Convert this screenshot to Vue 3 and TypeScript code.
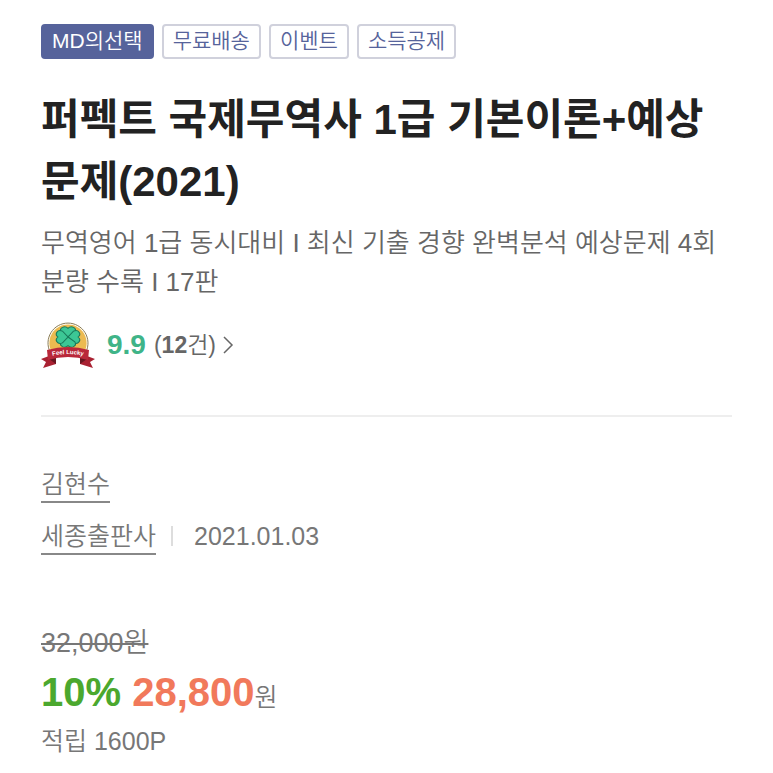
<script setup lang="ts">
interface Tag {
  label: string
  featured?: boolean
}

const tags: Tag[] = [
  { label: 'MD의선택', featured: true },
  { label: '무료배송' },
  { label: '이벤트' },
  { label: '소득공제' },
]

const leafAngles = [0, 90, 180, 270]

const book = {
  title: '퍼펙트 국제무역사 1급 기본이론+예상문제(2021)',
  subtitle: '무역영어 1급 동시대비 I 최신 기출 경향 완벽분석 예상문제 4회분량 수록 I 17판',
  score: '9.9',
  reviews: 12,
  author: '김현수',
  publisher: '세종출판사',
  published: '2021.01.03',
  listPrice: '32,000',
  discount: '10%',
  price: '28,800',
  points: '1600P',
}
</script>

<template>
  <main class="product">
    <ul class="tags">
      <li v-for="tag in tags" :key="tag.label" class="tag" :class="{ featured: tag.featured }">{{ tag.label }}</li>
    </ul>

    <h1 class="title">{{ book.title }}</h1>
    <p class="subtitle">{{ book.subtitle }}</p>

    <a class="rating" href="#reviews">
      <svg class="badge" viewBox="0 0 54 46" aria-hidden="true">
        <path d="M9.100 30A20 20 0 1 1 44.900 30Z" fill="#fffdf5" stroke="#8b7d58" stroke-width="1" />
        <path d="M10.700 30A18.600 18.600 0 1 1 43.300 30Z" fill="#ecba50" />
        <g transform="translate(27 15) scale(1.25 1.08)" fill="#3cc795" stroke="#19795a" stroke-width=".9" stroke-linejoin="round">
          <path
            v-for="angle in leafAngles"
            :key="angle"
            :transform="`rotate(${angle})`"
            d="M0 0L-5.500 -4.500C-7.500 -8.500 -2.500 -11 0 -8C2.500 -11 7.500 -8.500 5.500 -4.500Z"
          />
        </g>
        <path d="M8 34L0 37L5 40L2 46L15 42V36Z M46 34L54 37L49 40L52 46L39 42V36Z" fill="#a92132" />
        <path d="M8 37L15 42V35Z M46 37L39 42V35Z" fill="#681620" />
        <path d="M6 28Q27 22 48 28L47 38Q27 32 7 38Z" fill="#b9283a" />
        <path id="ribbon-line" d="M7 35Q27 29 47 35" fill="none" />
        <text class="badge-text" fill="#fff" text-anchor="middle">
          <textPath href="#ribbon-line" startOffset="50%">Feel Lucky</textPath>
        </text>
      </svg>
      <strong class="score">{{ book.score }}</strong>
      <span class="count">(<b>{{ book.reviews }}</b>건)</span>
      <svg class="chevron" viewBox="0 0 12 20" aria-hidden="true">
        <path d="M2 2L10 10L2 18" fill="none" stroke="#666" stroke-width="1.5" />
      </svg>
    </a>

    <section class="meta">
      <div class="meta-row">
        <a class="link" href="#author">{{ book.author }}</a>
      </div>
      <div class="meta-row">
        <a class="link" href="#publisher">{{ book.publisher }}</a>
        <span class="divider"></span>
        <time datetime="2021-01-03">{{ book.published }}</time>
      </div>
    </section>

    <section class="prices">
      <p class="list-price"><s>{{ book.listPrice }}원</s></p>
      <p class="sale"><strong class="discount">{{ book.discount }}</strong>&#32;<strong class="price">{{ book.price }}</strong><span class="won">원</span></p>
      <p class="points">적립 {{ book.points }}</p>
    </section>
  </main>
</template>

<style>
body {
  margin: 0;
  background: #fff;
}
</style>

<style scoped>
.product {
  padding: 24px 41px 14px;
  font-family: "Liberation Sans", "Noto Sans CJK KR", sans-serif;
  font-weight: 350;
  color: #666;
}

.tags {
  display: flex;
  flex-wrap: wrap;
  gap: 8px;
  margin: 0;
  padding: 0;
  list-style: none;
}

.tag {
  box-sizing: border-box;
  height: 35px;
  padding: 0 9px;
  border: 2px solid #d0d1dc;
  border-radius: 4px;
  font-size: 21px;
  line-height: 29px;
  color: #56639b;
}

.featured {
  border-color: #56639b;
  background: #56639b;
  color: #fff;
}

.title {
  margin: 30px 0 0;
  font-size: 42px;
  font-weight: 700;
  line-height: 62px;
  color: #222;
}

.subtitle {
  margin: 11px 0 0;
  font-size: 26px;
  line-height: 39px;
}

.rating {
  display: flex;
  align-items: center;
  width: max-content;
  margin-top: 20px;
  color: #666;
  text-decoration: none;
  line-height: 42px;
}

.badge {
  width: 54px;
  height: 46px;
}

.badge-text {
  font-size: 6px;
  font-weight: 700;
}

.score {
  margin: 0 8px 0 12px;
  font-size: 28px;
  font-weight: 700;
  color: #3fb488;
}

.count {
  font-size: 23px;
}

.count b {
  font-weight: 700;
}

.chevron {
  width: 12px;
  height: 20px;
  margin-left: 6px;
}

.meta {
  display: flex;
  flex-direction: column;
  gap: 17px;
  margin-top: 47px;
  padding-top: 51px;
  border-top: 2px solid #eee;
  font-size: 25px;
  line-height: 33px;
  color: #777;
}

.meta-row {
  display: flex;
  align-items: flex-start;
}

.link {
  border-bottom: 2px solid #888;
  color: #777;
  text-decoration: none;
}

.divider {
  width: 2px;
  height: 20px;
  margin: 6px 21px 0 15px;
  background: #ddd;
}

.prices {
  display: flex;
  flex-direction: column;
  gap: 4px;
  margin-top: 70px;
  color: #777;
}

.prices p {
  margin: 0;
}

.list-price {
  font-size: 27px;
  line-height: 36px;
}

.sale {
  font-size: 40px;
  line-height: 54px;
}

.discount,
.price {
  font-weight: 700;
}

.discount {
  color: #4ba82e;
}

.price {
  color: #f1795b;
}

.won {
  font-size: 25px;
  line-height: 1;
}

.points {
  font-size: 25px;
  line-height: 36px;
}
</style>
